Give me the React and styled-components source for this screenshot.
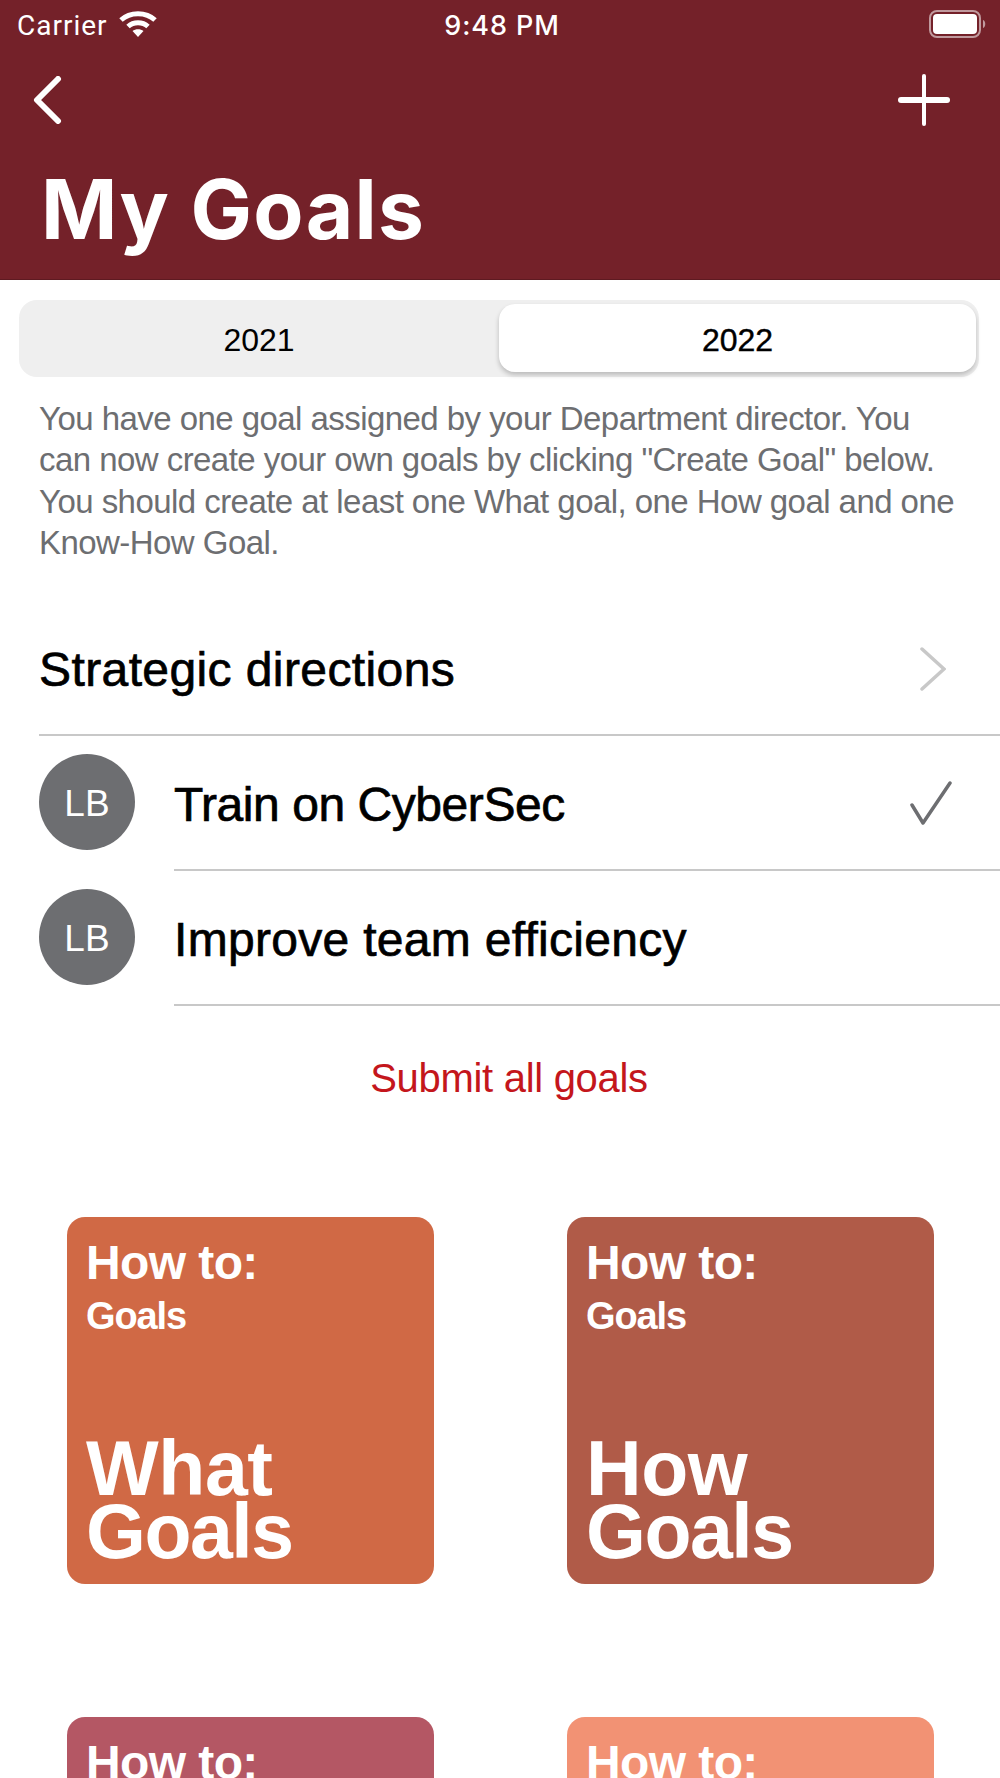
import React from "react";
import styled, { createGlobalStyle } from "styled-components";

const GlobalStyle = createGlobalStyle`
  html, body { margin: 0; padding: 0; background: #fff; }
  body { font-family: "Liberation Sans", Arial, sans-serif; }
`;

const Page = styled.div`
  width: 1000px;
  height: 1778px;
  overflow: hidden;
  background: #fff;
`;

const Header = styled.header`
  height: 280px;
  box-sizing: border-box;
  background: #742129;
  border-bottom: 1px solid #5e1a21;
  color: #fff;
`;

const StatusBar = styled.div`
  height: 50px;
  box-sizing: border-box;
  padding: 10px 13px 0 17px;
  display: grid;
  grid-template-columns: 1fr auto 1fr;
  align-items: start;
  font-family: Inter, sans-serif;
  font-size: 27px;
  line-height: 32px;
`;

const Carrier = styled.div`
  display: flex;
  align-items: flex-start;
  gap: 11px;
  font-family: Roboto, sans-serif;
  font-size: 28px;
  letter-spacing: 1px;
`;

const Clock = styled.div`
  font-weight: 500;
  letter-spacing: 0.9px;
`;

const BatterySlot = styled.div`
  display: flex;
  justify-content: flex-end;
`;

const NavBar = styled.div`
  height: 100px;
  padding: 0 50px 0 32px;
  display: flex;
  align-items: center;
  justify-content: space-between;
`;

const Title = styled.h1`
  margin: 18px 0 0;
  padding-left: 41px;
  font-family: Inter, sans-serif;
  font-size: 82px;
  line-height: 84px;
  font-weight: 700;
  letter-spacing: 1.2px;
`;

const Segments = styled.div`
  margin: 20px 21px 0 19px;
  height: 77px;
  box-sizing: border-box;
  padding: 4px 3px 5px 0;
  border-radius: 18px;
  background: #efefef;
  display: grid;
  grid-template-columns: 1fr 477px;
`;

const Segment = styled.div`
  display: flex;
  align-items: center;
  justify-content: center;
  padding-top: 5px;
  border-radius: 16px;
  font-size: 32px;
  letter-spacing: 0;
  color: #000;
  ${(p) => p.$active && `
    background: #fff;
    -webkit-text-stroke: 0.4px #000;
    box-shadow: 0 3px 5px rgba(0, 0, 0, 0.22);
  `}
`;

const Intro = styled.p`
  margin: 21px 0 0;
  padding: 0 40px 0 39px;
  font-size: 33px;
  line-height: 41.3px;
  letter-spacing: -0.55px;
  color: #6d6e71;
`;

const HeadRow = styled.div`
  margin: 41px 0 0 39px;
  height: 130px;
  padding-right: 54px;
  border-bottom: 2px solid #c8c8c8;
  display: flex;
  align-items: center;
  justify-content: space-between;
  font-size: 48px;
  letter-spacing: 0.4px;
  -webkit-text-stroke: 0.7px #000;
  color: #000;
`;

const GoalRow = styled.div`
  display: flex;
  align-items: stretch;
  padding-left: 39px;
  gap: 39px;
`;

const Avatar = styled.div`
  flex: none;
  width: 96px;
  height: 96px;
  box-sizing: border-box;
  padding-top: 3px;
  margin-top: 18px;
  border-radius: 50%;
  background: #6d6e71;
  color: #fff;
  display: flex;
  align-items: center;
  justify-content: center;
  font-size: 37px;
`;

const GoalBody = styled.div`
  flex: 1;
  height: 133px;
  padding-right: 46px;
  border-bottom: 2px solid #c8c8c8;
  display: flex;
  align-items: center;
  justify-content: space-between;
  font-size: 48px;
  color: #000;
`;

const GoalName = styled.span`
  padding-top: 4px;
  letter-spacing: ${(p) => p.$tracking}px;
  -webkit-text-stroke: 0.7px #000;
`;

const Submit = styled.div`
  margin-top: 48px;
  padding-left: 18px;
  text-align: center;
  font-size: 40px;
  line-height: 48px;
  letter-spacing: -0.3px;
  color: #c4161c;
`;

const CardGrid = styled.div`
  margin-top: 115px;
  padding-left: 67px;
  display: grid;
  grid-template-columns: 367px 367px;
  column-gap: 133px;
  row-gap: 133px;
`;

const Card = styled.div`
  height: 367px;
  box-sizing: border-box;
  padding: 19px 20px 21px 19px;
  border-radius: 18px;
  background: ${(p) => p.$color};
  color: #fff;
  display: flex;
  flex-direction: column;
  font-weight: 700;
`;

const CardHow = styled.div`
  font-size: 48px;
  line-height: 54px;
  letter-spacing: -0.6px;
`;

const CardSub = styled.div`
  margin-top: 4px;
  font-size: 38px;
  line-height: 44px;
  letter-spacing: -1.1px;
`;

const CardName = styled.div`
  margin-top: auto;
  font-size: 77px;
  line-height: 63px;
  letter-spacing: -1.5px;
`;

const CardWord = styled.span`
  letter-spacing: -0.4px;
`;

const WifiIcon = () => (
  <svg width="38" height="28" viewBox="0 0 38 28" fill="none" stroke="#fff" strokeWidth="5">
    <path d="M2 10C11 1.500 27 1.500 36 10" />
    <path d="M9 16.500C14.500 11.500 23.500 11.500 29 16.500" />
    <path d="M19 27L13.500 21C16.500 18.800 21.500 18.800 24.500 21Z" fill="#fff" stroke="none" />
  </svg>
);

const BatteryIcon = () => (
  <svg width="58" height="28" viewBox="0 0 58 28">
    <rect x="1" y="1" width="50" height="26" rx="7" fill="none" stroke="#c09a9e" strokeWidth="2" />
    <rect x="4" y="4" width="44" height="20" rx="4" fill="#fff" />
    <path d="M54 10C57 11 57 17 54 18Z" fill="#c09a9e" />
  </svg>
);

const BackIcon = () => (
  <svg width="30" height="48" viewBox="0 0 30 48" fill="none" stroke="#fff" strokeWidth="6" strokeLinecap="round" strokeLinejoin="round">
    <path d="M26 3L5 24L26 45" />
  </svg>
);

const PlusIcon = () => (
  <svg width="52" height="52" viewBox="0 0 52 52" stroke="#fff" strokeLinecap="round">
    <path d="M26 2V50" strokeWidth="4" />
    <path d="M3 26H49" strokeWidth="6" />
  </svg>
);

const ChevronIcon = () => (
  <svg width="26" height="44" viewBox="0 0 26 44" fill="none" stroke="#c8c8c8" strokeWidth="3.500" strokeLinecap="round">
    <path d="M2 2L24 22L2 42" />
  </svg>
);

const CheckIcon = () => (
  <svg width="44" height="44" viewBox="0 0 44 44" fill="none" stroke="#6d6e71" strokeWidth="3.500" strokeLinecap="round" strokeLinejoin="round">
    <path d="M2 24L13 42L40 2" />
  </svg>
);

const goals = [
  { name: "Train on CyberSec", done: true, tracking: -0.45 },
  { name: "Improve team efficiency", done: false, tracking: 0.3 },
];

const guideCards = [
  { color: "#d06945", name: "What" },
  { color: "#b05b48", name: "How" },
];

// the second row is cut off by the bottom of the window
const lowerCards = ["#b45764", "#f29274"];

const App = () => {
  return (
    <Page>
      <GlobalStyle />
      <Header>
        <StatusBar>
          <Carrier>
            Carrier
            <WifiIcon />
          </Carrier>
          <Clock>9:48 PM</Clock>
          <BatterySlot>
            <BatteryIcon />
          </BatterySlot>
        </StatusBar>
        <NavBar>
          <BackIcon />
          <PlusIcon />
        </NavBar>
        <Title>My Goals</Title>
      </Header>

      <Segments>
        <Segment>2021</Segment>
        <Segment $active>2022</Segment>
      </Segments>

      <Intro>
        You have one goal assigned by your Department director. You can now create your own goals by clicking "Create Goal" below. You should create at least one What goal, one How goal and one Know-How Goal.
      </Intro>

      <HeadRow>
        Strategic directions
        <ChevronIcon />
      </HeadRow>

      {goals.map((goal) => (
        <GoalRow key={goal.name}>
          <Avatar>LB</Avatar>
          <GoalBody>
            <GoalName $tracking={goal.tracking}>{goal.name}</GoalName>
            {goal.done && <CheckIcon />}
          </GoalBody>
        </GoalRow>
      ))}

      <Submit>Submit all goals</Submit>

      <CardGrid>
        {guideCards.map((card) => (
          <Card key={card.name} $color={card.color}>
            <CardHow>How to:</CardHow>
            <CardSub>Goals</CardSub>
            <CardName>
              <CardWord>{card.name}</CardWord>
              <br />
              Goals
            </CardName>
          </Card>
        ))}
        {lowerCards.map((color) => (
          <Card key={color} $color={color}>
            <CardHow>How to:</CardHow>
          </Card>
        ))}
      </CardGrid>
    </Page>
  );
};

export default App;
